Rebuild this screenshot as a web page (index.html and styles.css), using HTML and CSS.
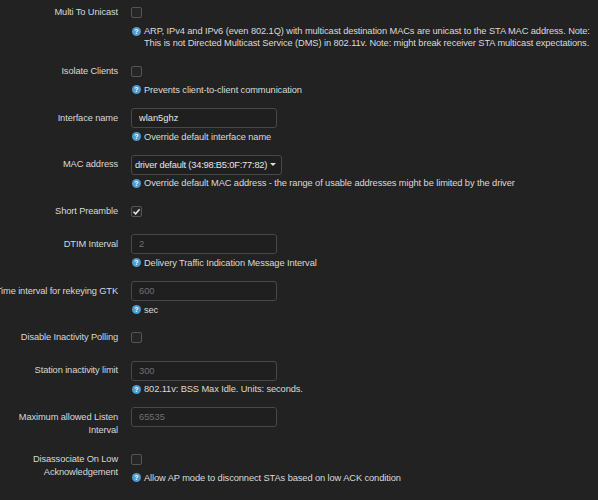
FILE: index.html
```html
<!DOCTYPE html>
<html lang="en">
<head>
  <meta charset="UTF-8" />
  <meta name="viewport" content="width=device-width, initial-scale=1.0" />
  <title>Wireless – Advanced Settings</title>
  <link rel="stylesheet" href="styles.css">
</head>
<body>

<div class="form">

  <div class="field">
    <label class="label">Multi To Unicast</label>
    <div class="value">
      <div class="control"><span class="checkbox"></span></div>
      <div class="help"><span class="q">?</span><span>ARP, IPv4 and IPv6 (even 802.1Q) with multicast destination MACs are unicast to the STA MAC address. Note: This is not Directed Multicast Service (DMS) in 802.11v. Note: might break receiver STA multicast expectations.</span></div>
    </div>
  </div>

  <div class="field">
    <label class="label">Isolate Clients</label>
    <div class="value">
      <div class="control"><span class="checkbox"></span></div>
      <div class="help"><span class="q">?</span><span>Prevents client-to-client communication</span></div>
    </div>
  </div>

  <div class="field">
    <label class="label">Interface name</label>
    <div class="value">
      <div class="control"><input class="text" type="text" value="wlan5ghz" /></div>
      <div class="help"><span class="q">?</span><span>Override default interface name</span></div>
    </div>
  </div>

  <div class="field">
    <label class="label">MAC address</label>
    <div class="value">
      <div class="control">
        <div class="select">driver default (34:98:B5:0F:77:82) <span class="caret"></span></div>
      </div>
      <div class="help"><span class="q">?</span><span>Override default MAC address - the range of usable addresses might be limited by the driver</span></div>
    </div>
  </div>

  <div class="field">
    <label class="label">Short Preamble</label>
    <div class="value">
      <div class="control">
        <span class="checkbox checked">
          <svg width="9" height="9" viewBox="0 0 9 9"><path d="M1.5 4.8 L3.6 6.8 L7.6 2.2" fill="none" stroke="#e6e6e6" stroke-width="1.5"/></svg>
        </span>
      </div>
    </div>
  </div>

  <div class="field">
    <label class="label">DTIM Interval</label>
    <div class="value">
      <div class="control"><input class="text" type="text" placeholder="2" /></div>
      <div class="help"><span class="q">?</span><span>Delivery Traffic Indication Message Interval</span></div>
    </div>
  </div>

  <div class="field">
    <label class="label nowrap">Time interval for rekeying GTK</label>
    <div class="value">
      <div class="control"><input class="text" type="text" placeholder="600" /></div>
      <div class="help"><span class="q">?</span><span>sec</span></div>
    </div>
  </div>

  <div class="field">
    <label class="label">Disable Inactivity Polling</label>
    <div class="value">
      <div class="control"><span class="checkbox"></span></div>
    </div>
  </div>

  <div class="field">
    <label class="label">Station inactivity limit</label>
    <div class="value">
      <div class="control"><input class="text" type="text" placeholder="300" /></div>
      <div class="help"><span class="q">?</span><span>802.11v: BSS Max Idle. Units: seconds.</span></div>
    </div>
  </div>

  <div class="field">
    <label class="label">Maximum allowed Listen Interval</label>
    <div class="value">
      <div class="control"><input class="text" type="text" placeholder="65535" /></div>
    </div>
  </div>

  <div class="field">
    <label class="label">Disassociate On Low Acknowledgement</label>
    <div class="value">
      <div class="control"><span class="checkbox"></span></div>
      <div class="help"><span class="q">?</span><span>Allow AP mode to disconnect STAs based on low ACK condition</span></div>
    </div>
  </div>

</div>

</body>
</html>
```

FILE: styles.css
```css
body {
  margin: 0;
  padding: 2px 0 0 0;
  background: #222222;
  color: #d8d8d8;
  font-family: "Liberation Sans", Arial, sans-serif;
  font-size: 9.3px;
  overflow: hidden;
}

.field {
  display: grid;
  grid-template-columns: 118px 1fr;
  column-gap: 13px;
  margin-bottom: 11.75px;
}

.label {
  display: flex;
  justify-content: flex-end;
  text-align: right;
  line-height: 13px;
  padding-top: 4px;
  letter-spacing: -0.12px;
  color: #d8d8d8;
}

.label.nowrap {
  white-space: nowrap;
}

.control {
  height: 21px;
  display: flex;
  align-items: center;
}

.checkbox {
  width: 9px;
  height: 9px;
  border: 1px solid #555555;
  border-radius: 2px;
  background: #262626;
  display: flex;
  align-items: center;
  justify-content: center;
}

.text {
  box-sizing: border-box;
  width: 146px;
  height: 20px;
  margin: 0;
  padding: 0 7px;
  background: #1f1f1f;
  border: 1px solid #484848;
  border-radius: 3px;
  color: #e6e6e6;
  font-family: inherit;
  font-size: 9.3px;
  outline: none;
}

.text::placeholder {
  color: #6f6f6f;
}

.select {
  box-sizing: border-box;
  width: 151px;
  height: 20px;
  padding: 0 5px 0 3px;
  display: flex;
  align-items: center;
  justify-content: space-between;
  background: #1f1f1f;
  border: 1px solid #484848;
  border-radius: 3px;
  color: #e6e6e6;
  letter-spacing: -0.2px;
  white-space: nowrap;
  overflow: hidden;
}

.caret {
  flex: none;
  width: 0;
  height: 0;
  border-left: 3px solid transparent;
  border-right: 3px solid transparent;
  border-top: 3px solid #dddddd;
}

.help {
  display: flex;
  align-items: flex-start;
  gap: 3px;
  margin-top: 2px;
  padding-right: 4px;
  line-height: 12px;
  letter-spacing: -0.1px;
  color: #dadada;
}

.q {
  flex: none;
  width: 9px;
  height: 9px;
  margin: 1.5px 0 0 1px;
  border-radius: 50%;
  background: #4c9bd2;
  color: #ffffff;
  font-size: 7px;
  font-weight: bold;
  line-height: 9px;
  letter-spacing: 0;
  text-align: center;
}
```
